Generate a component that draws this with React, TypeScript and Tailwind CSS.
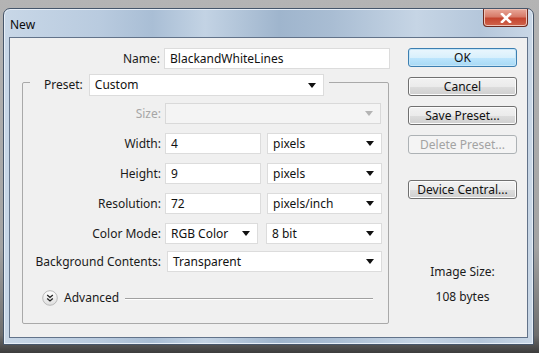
import type { ReactNode } from "react";

/* ── small pieces ─────────────────────────────────────────── */

function Arrow({ disabled }: { disabled?: boolean }) {
  return (
    <svg width="8" height="5" viewBox="0 0 8 5" aria-hidden className="shrink-0">
      <polygon points="0,0 8,0 4,5" fill={disabled ? "#b4b4b4" : "#111"} />
    </svg>
  );
}

function Field({ w, value }: { w: string; value: string }) {
  return (
    <div className={`${w} flex h-[21px] items-center border border-[#dcdcdc] bg-white pl-[5px] text-[#111]`}>
      {value}
    </div>
  );
}

function Select({ w, value, disabled }: { w: string; value?: string; disabled?: boolean }) {
  return (
    <div
      className={`${w} flex h-[21px] items-center justify-between border pl-[5px] pr-[7px] ${
        disabled ? "border-[#d9d9d9] bg-[#f4f4f4]" : "border-[#dcdcdc] bg-white text-[#111]"
      }`}
    >
      <span>{value}</span>
      <Arrow disabled={disabled} />
    </div>
  );
}

function Btn({ children, kind }: { children: ReactNode; kind?: "default" | "disabled" }) {
  const look =
    kind === "default"
      ? "border-[#3c7fb1] bg-[linear-gradient(#eaf6fd_0%,#d9f0fc_50%,#bee6fd_51%,#a7d9f5_100%)] text-[#111] shadow-[inset_0_0_0_1px_#c6e6f8]"
      : kind === "disabled"
        ? "border-[#adb2b5] bg-[#f4f4f4] text-[#a3a3a3]"
        : "border-[#707070] bg-[linear-gradient(#f2f2f2_0%,#ebebeb_50%,#dddddd_51%,#cfcfcf_100%)] text-[#111] shadow-[inset_0_0_0_1px_#fcfcfc]";
  return (
    <div className={`flex h-[19px] w-[109px] items-center justify-center rounded-[3px] border ${look}`}>
      {children}
    </div>
  );
}

function Row({ label, dim, children }: { label: string; dim?: boolean; children: ReactNode }) {
  return (
    <div className="flex h-[21px] items-center">
      <div className={`w-[138px] text-right ${dim ? "text-[#a6a6a6]" : "text-[#1a1a1a]"}`}>{label}</div>
      <div className="ml-[4px] flex items-center">{children}</div>
    </div>
  );
}

function AdvancedIcon() {
  return (
    <svg width="16" height="16" viewBox="0 0 16 16" aria-hidden className="shrink-0">
      <defs>
        <linearGradient id="adv" x1="0" y1="0" x2="0" y2="1">
          <stop offset="0" stopColor="#ffffff" />
          <stop offset="1" stopColor="#dedede" />
        </linearGradient>
      </defs>
      <circle cx="8" cy="8" r="7.3" fill="url(#adv)" stroke="#b9b9b9" strokeWidth="1" />
      <path d="M5.2 5 L8 7.4 L10.8 5 M5.2 8.6 L8 11 L10.8 8.6" fill="none" stroke="#222" strokeWidth="1.3" />
    </svg>
  );
}

/* ── dialog ───────────────────────────────────────────────── */

export default function App() {
  return (
    <div className="h-[353px] w-[539px] overflow-hidden bg-[linear-gradient(#b4b4b4_0%,#a3a3a3_70%,#6e6e6e_95%,#3c3c3c_100%)] pl-[3px] pt-[8px] font-['Noto_Sans','Liberation_Sans',sans-serif] text-[12px] leading-none">
      <div className="h-[337px] w-[531px] rounded-t-[7px] border border-[#46566a] bg-[linear-gradient(90deg,#c8d7e7_0%,#b9cbdf_18%,#a9bed5_28%,#c3d3e4_38%,#9fb5cd_52%,#a9bdd3_62%,#c6d5e5_78%,#b5c7db_90%,#c9d7e6_100%)] px-[5px] shadow-[inset_0_0_0_1px_#e6eef7]">
        {/* title bar */}
        <div className="flex h-[28px] items-start justify-between">
          <span className="mt-[10px] pl-[1px] text-[12px] text-[#0b0b0b]">New</span>
          <div className="flex h-[18px] w-[45px] items-center justify-center rounded-b-[4px] border border-t-0 border-[#6d2a1f] bg-[linear-gradient(#e9a99a_0%,#d77b69_45%,#c4452f_55%,#d0644c_100%)] shadow-[inset_0_0_0_1px_#eec2b6]">
            <svg width="12" height="10" viewBox="0 0 12 10" aria-hidden>
              <path d="M2 1 L10 9 M10 1 L2 9" stroke="#fff" strokeWidth="2.6" strokeLinecap="square" />
            </svg>
          </div>
        </div>

        {/* client area */}
        <div className="flex h-[301px] border border-[#62738a] bg-[#f0f0f0]">
          {/* left column */}
          <div className="w-[380px]">
            <div className="mt-[10px] flex h-[21px] items-center">
              <div className="w-[150px] text-right text-[#1a1a1a]">Name:</div>
              <div className="ml-[4px]">
                <Field w="w-[226px]" value="BlackandWhiteLines" />
              </div>
            </div>

            <div className="ml-[12px] mt-[13px] box-border h-[242px] w-[367px] rounded-[2px] border border-[#a9a9a9]">
              <div className="-mt-[9px] ml-[7px] flex h-[22px] w-fit items-center bg-[#f0f0f0] pl-[14px] pr-[5px]">
                <span className="text-[#1a1a1a]">Preset:</span>
                <div className="ml-[6px]">
                  <Select w="w-[235px] h-[22px]" value="Custom" />
                </div>
              </div>

              <div className="mt-[7px] flex flex-col gap-[9px]">
                <Row label="Size:" dim>
                  <Select w="w-[216px]" disabled />
                </Row>
                <Row label="Width:">
                  <Field w="w-[96px]" value="4" />
                  <div className="ml-[6px]">
                    <Select w="w-[115px]" value="pixels" />
                  </div>
                </Row>
                <Row label="Height:">
                  <Field w="w-[96px]" value="9" />
                  <div className="ml-[6px]">
                    <Select w="w-[115px]" value="pixels" />
                  </div>
                </Row>
                <Row label="Resolution:">
                  <Field w="w-[96px]" value="72" />
                  <div className="ml-[6px]">
                    <Select w="w-[115px]" value="pixels/inch" />
                  </div>
                </Row>
                <Row label="Color Mode:">
                  <Select w="w-[93px]" value="RGB Color" />
                  <div className="ml-[8px]">
                    <Select w="w-[116px]" value="8 bit" />
                  </div>
                </Row>
                <div className="-mt-[2px]">
                  <Row label="Background Contents:">
                    <div className="ml-[2px]">
                      <Select w="w-[215px]" value="Transparent" />
                    </div>
                  </Row>
                </div>
              </div>

              <div className="ml-[19px] mr-[15px] mt-[18px] flex h-[16px] items-center">
                <AdvancedIcon />
                <span className="ml-[6px] text-[#1a1a1a]">Advanced</span>
                <div className="ml-[6px] h-px flex-1 bg-[#a0a0a0] shadow-[0_1px_0_#ffffff]" />
              </div>
            </div>
          </div>

          {/* right column */}
          <div className="ml-[18px] flex w-[109px] flex-col">
            <div className="mt-[10px] flex flex-col gap-[10px]">
              <Btn kind="default">OK</Btn>
              <Btn>Cancel</Btn>
              <Btn>Save Preset...</Btn>
              <Btn kind="disabled">Delete Preset...</Btn>
            </div>
            <div className="mt-[26px]">
              <Btn>Device Central...</Btn>
            </div>
            <div className="mt-[67px] text-center text-[#1a1a1a]">Image Size:</div>
            <div className="mt-[13px] text-center text-[#1a1a1a]">108 bytes</div>
          </div>
        </div>
      </div>
    </div>
  );
}
